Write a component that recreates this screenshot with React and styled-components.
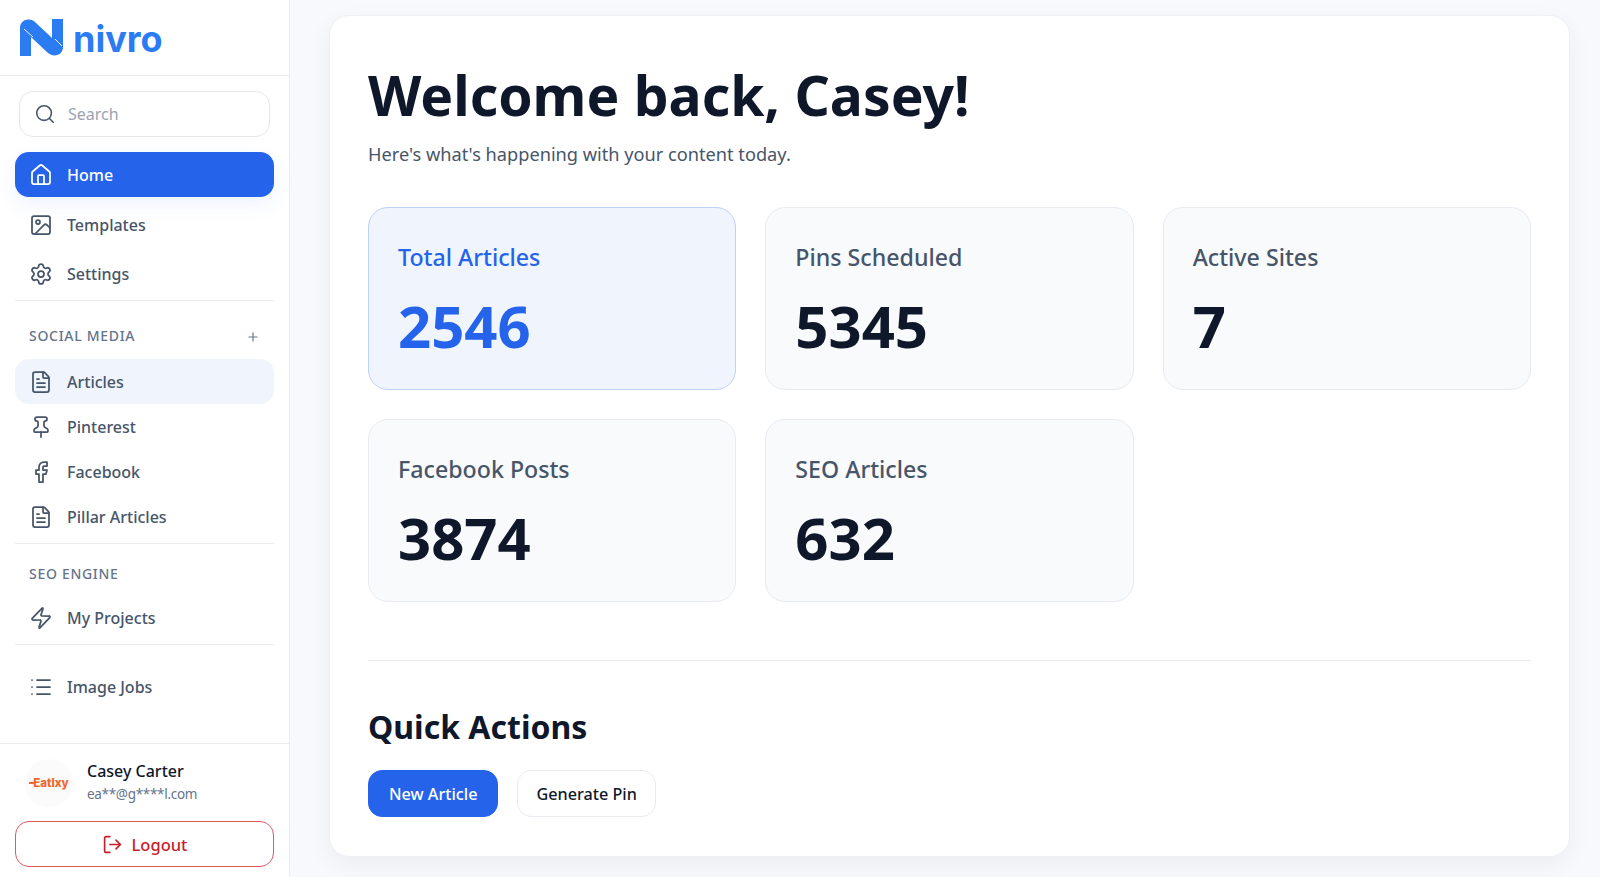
import React from "react";
import styled, { createGlobalStyle } from "styled-components";
import {
  Search,
  House,
  Image,
  Settings,
  Plus,
  FileText,
  Pin,
  Facebook,
  Zap,
  List,
  LogOut,
} from "lucide-react";

const GlobalStyle = createGlobalStyle`
  html, body {
    margin: 0;
    padding: 0;
    height: 100%;
    overflow: hidden;
  }
  body {
    font-family: "Noto Sans", "Open Sans", sans-serif;
    color: #0f172a;
  }
  * {
    box-sizing: border-box;
  }
`;

const Layout = styled.div`
  display: flex;
  width: 100%;
  height: 877px;
  background: #f8f9fc;
`;

// 사이드바
const Sidebar = styled.aside`
  flex: 0 0 290px;
  display: flex;
  flex-direction: column;
  background: #ffffff;
  border-right: 1px solid #e8ebf0;
`;

const LogoBar = styled.div`
  height: 76px;
  display: flex;
  align-items: center;
  gap: 10px;
  padding: 0 0 0 20px;
  border-bottom: 1px solid #e8ebf0;
`;

const LogoText = styled.span`
  font-family: "Inter", sans-serif;
  font-size: 36px;
  font-weight: 700;
  color: #2b7cf3;
  line-height: 1;
  margin-top: 3px;
`;

const SearchBox = styled.div`
  height: 46px;
  margin: 15px 19px 15px 19px;
  padding: 0 14px;
  display: flex;
  align-items: center;
  gap: 12px;
  border: 1px solid #e5e7eb;
  border-radius: 14px;
  color: #475569;
`;

const SearchHint = styled.span`
  font-size: 16px;
  color: #9ca3af;
`;

const Nav = styled.nav`
  display: flex;
  flex-direction: column;
  padding: 0 15px;
`;

const NavItem = styled.a`
  display: flex;
  align-items: center;
  gap: 14px;
  height: ${(p) => p.$h || 45}px;
  margin-top: ${(p) => p.$top || 0}px;
  padding: 0 14px;
  border-radius: 14px;
  font-size: 16px;
  font-weight: 500;
  color: ${(p) => (p.$active ? "#ffffff" : "#475569")};
  background: ${(p) =>
    p.$active ? "#2563eb" : p.$soft ? "#eff4fd" : "transparent"};
  box-shadow: ${(p) =>
    p.$active ? "0 8px 20px rgba(37, 99, 235, 0.08)" : "none"};
`;

const Rule = styled.div`
  height: 1px;
  background: #e8ebf0;
  margin: ${(p) => p.$m || "0"};
`;

const SectionHead = styled.div`
  display: flex;
  align-items: center;
  justify-content: space-between;
  padding: 0 14px;
  height: 20px;
  margin: ${(p) => p.$m || "0"};
  font-size: 14px;
  font-weight: 500;
  letter-spacing: 0.7px;
  color: #64748b;
`;

const AddIcon = styled.span`
  display: flex;
  margin-top: 3px;
  color: #64748b;
`;

const Footer = styled.div`
  margin-top: auto;
  border-top: 1px solid #e8ebf0;
  padding: 15px 15px 10px;
`;

const UserRow = styled.div`
  display: flex;
  align-items: center;
  gap: 14px;
  padding-left: 10px;
  margin-bottom: 14px;
`;

const Avatar = styled.div`
  width: 48px;
  height: 48px;
  border-radius: 50%;
  background: #fbfbfc;
  display: flex;
  align-items: center;
  justify-content: center;
  font-family: "Inter", sans-serif;
  font-size: 11.5px;
  font-weight: 800;
  color: #f2682a;

  &::before {
    content: "";
    width: 5px;
    height: 2px;
    margin-right: -1px;
    background: #f2682a;
  }
`;

const UserName = styled.div`
  font-size: 16px;
  font-weight: 500;
  line-height: 23px;
  color: #0f172a;
`;

const UserMail = styled.div`
  font-size: 13.5px;
  line-height: 23px;
  letter-spacing: -0.3px;
  color: #64748b;
`;

const LogoutButton = styled.button`
  width: 100%;
  height: 46px;
  display: flex;
  align-items: center;
  justify-content: center;
  gap: 9px;
  background: #ffffff;
  border: 1px solid #dc5b5f;
  border-radius: 14px;
  font-family: inherit;
  font-size: 16.5px;
  font-weight: 500;
  color: #c81e2b;
`;

// 본문
const Main = styled.main`
  flex: 1;
  min-width: 0;
  padding: 15px 30px 20px 39px;
  display: flex;
`;

const Panel = styled.section`
  flex: 1;
  background: #ffffff;
  border: 1px solid #eef0f4;
  border-radius: 20px;
  box-shadow: 0 8px 24px rgba(15, 23, 42, 0.05);
  padding: 41px 38px 0;
`;

const Title = styled.h1`
  margin: 0;
  font-size: 55.2px;
  line-height: 76px;
  font-weight: 700;
  color: #0f172a;
`;

const Subtitle = styled.p`
  margin: 7px 0 0;
  font-size: 18.2px;
  line-height: 28px;
  color: #475569;
`;

const StatGrid = styled.div`
  display: grid;
  grid-template-columns: repeat(3, 1fr);
  gap: 29px;
  margin-top: 39px;
`;

const StatCard = styled.div`
  height: 183px;
  padding: 31px 29px;
  border-radius: 20px;
  border: 1px solid ${(p) => (p.$hot ? "#bfd0f7" : "#e8ebf0")};
  background: ${(p) => (p.$hot ? "#eff4fd" : "#f8fafc")};
`;

const StatLabel = styled.div`
  font-size: 23.2px;
  line-height: 36px;
  font-weight: 500;
  color: ${(p) => (p.$hot ? "#2563eb" : "#475569")};
`;

const StatValue = styled.div`
  margin-top: 17px;
  font-size: 58px;
  line-height: 68px;
  font-weight: 700;
  color: ${(p) => (p.$hot ? "#2563eb" : "#0f172a")};
`;

const Divider = styled.div`
  height: 1px;
  background: #e8ebf0;
  margin-top: 58px;
`;

const SectionTitle = styled.h2`
  margin: 44px 0 0;
  font-size: 32px;
  line-height: 44px;
  font-weight: 700;
  color: #0f172a;
`;

const Actions = styled.div`
  display: flex;
  gap: 19px;
  margin-top: 21px;
`;

const ActionButton = styled.button`
  height: 47px;
  padding: 0 ${(p) => (p.$primary ? 20 : 18)}px;
  border-radius: 14px;
  border: 1px solid ${(p) => (p.$primary ? "#2563eb" : "#e8ebf0")};
  background: ${(p) => (p.$primary ? "#2563eb" : "#ffffff")};
  color: ${(p) => (p.$primary ? "#ffffff" : "#0f172a")};
  font-family: inherit;
  font-size: 16.2px;
  font-weight: 500;
`;

const LogoMark = () => (
  <svg width="43" height="37" viewBox="0 0 43 37">
    <path
      d="M0 9C0 1 9-2 15 3L32 19V0H43V28C43 36 34 39 28 34L11 18V37H0Z"
      fill="#2b7cf3"
    />
    <path d="M4 10L13 18" stroke="#fff" strokeWidth="0.9" fill="none" />
    <path d="M35 20L42 27" stroke="#fff" strokeWidth="0.9" fill="none" />
  </svg>
);

const stats = [
  { label: "Total Articles", value: "2546", hot: true },
  { label: "Pins Scheduled", value: "5345" },
  { label: "Active Sites", value: "7" },
  { label: "Facebook Posts", value: "3874" },
  { label: "SEO Articles", value: "632" },
];

const App = () => {
  return (
    <Layout>
      <GlobalStyle />
      <Sidebar>
        <LogoBar>
          <LogoMark />
          <LogoText>nivro</LogoText>
        </LogoBar>

        <SearchBox>
          <Search size={22} strokeWidth={1.75} />
          <SearchHint>Search</SearchHint>
        </SearchBox>

        <Nav>
          <NavItem $active>
            <House size={24} strokeWidth={1.75} />
            Home
          </NavItem>
          <NavItem $h={52} $top={2}>
            <Image size={24} strokeWidth={1.75} />
            Templates
          </NavItem>
          <NavItem>
            <Settings size={24} strokeWidth={1.75} />
            Settings
          </NavItem>
          <Rule $m="4px 0 0" />
          <SectionHead $m="24px 0 14px">
            SOCIAL MEDIA
            <AddIcon>
              <Plus size={14} />
            </AddIcon>
          </SectionHead>
          <NavItem $soft>
            <FileText size={24} strokeWidth={1.75} />
            Articles
          </NavItem>
          <NavItem>
            <Pin size={24} strokeWidth={1.75} />
            Pinterest
          </NavItem>
          <NavItem>
            <Facebook size={24} strokeWidth={1.75} />
            Facebook
          </NavItem>
          <NavItem>
            <FileText size={24} strokeWidth={1.75} />
            Pillar Articles
          </NavItem>
          <Rule $m="4px 0 0" />
          <SectionHead $m="19px 0 12px">SEO ENGINE</SectionHead>
          <NavItem>
            <Zap size={24} strokeWidth={1.75} />
            My Projects
          </NavItem>
          <Rule $m="4px 0 19px" />
          <NavItem>
            <List size={24} strokeWidth={1.75} />
            Image Jobs
          </NavItem>
        </Nav>

        <Footer>
          <UserRow>
            <Avatar>Eatlxy</Avatar>
            <div>
              <UserName>Casey Carter</UserName>
              <UserMail>ea**@g****l.com</UserMail>
            </div>
          </UserRow>
          <LogoutButton>
            <LogOut size={21} strokeWidth={1.9} />
            Logout
          </LogoutButton>
        </Footer>
      </Sidebar>

      <Main>
        <Panel>
          <Title>Welcome back, Casey!</Title>
          <Subtitle>Here's what's happening with your content today.</Subtitle>

          <StatGrid>
            {stats.map((s) => (
              <StatCard key={s.label} $hot={s.hot}>
                <StatLabel $hot={s.hot}>{s.label}</StatLabel>
                <StatValue $hot={s.hot}>{s.value}</StatValue>
              </StatCard>
            ))}
          </StatGrid>

          <Divider />

          <SectionTitle>Quick Actions</SectionTitle>
          <Actions>
            <ActionButton $primary>New Article</ActionButton>
            <ActionButton>Generate Pin</ActionButton>
          </Actions>
        </Panel>
      </Main>
    </Layout>
  );
};

export default App;
